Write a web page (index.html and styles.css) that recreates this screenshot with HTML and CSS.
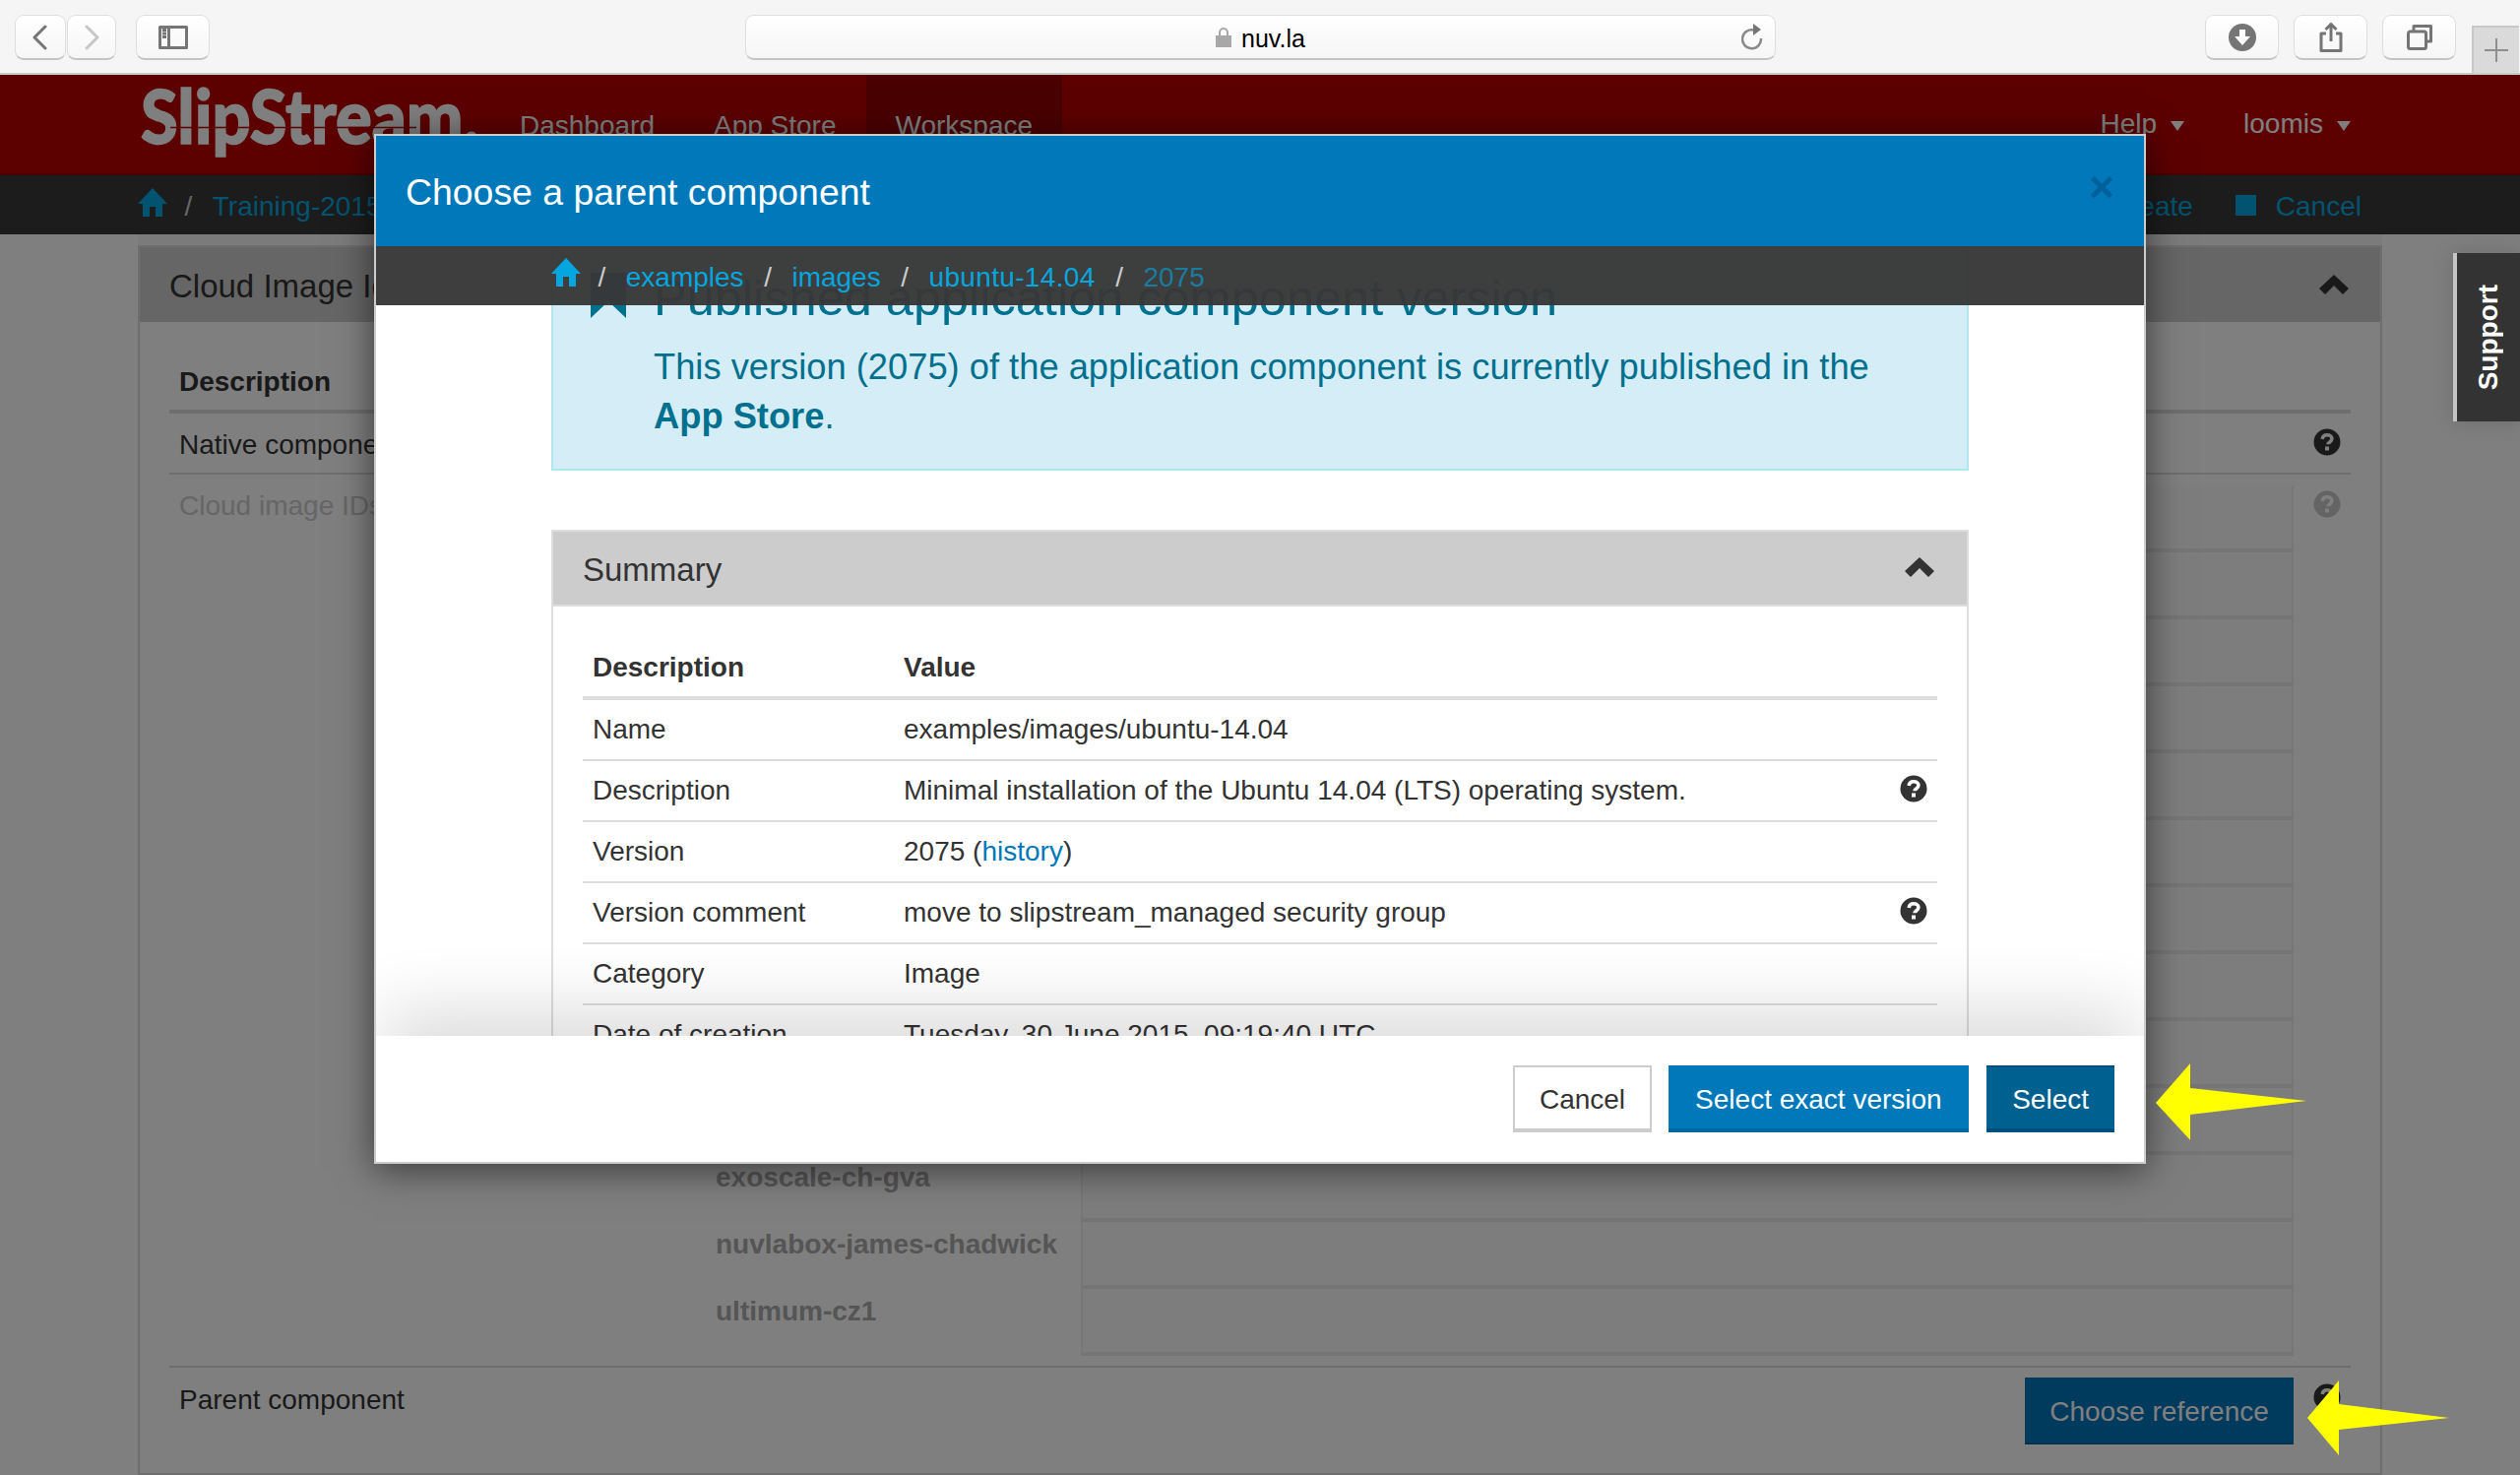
FILE: index.html
```html
<!DOCTYPE html>
<html lang="en">
<head>
<meta charset="utf-8">
<title>SlipStream</title>
<link rel="stylesheet" href="styles.css">
</head>
<body>
<svg class="defs" width="0" height="0">
  <symbol id="home" viewBox="0 0 30 29"><path d="M15 0 30 16H25V29H18V19H12V29H5V16H0Z"/></symbol>
  <symbol id="help" viewBox="0 0 28 28"><circle cx="14" cy="14" r="13.5"/><path class="q" d="M9.2 11c.3-2.800 2.300-4.200 4.900-4.200 2.800 0 4.800 1.500 4.800 3.800 0 3.300-3.900 3.200-3.900 5.600" /><rect class="qd" x="12" y="18.500" width="4" height="4"/></symbol>
  <symbol id="chev" viewBox="0 0 30 20"><path d="M15 0 30 14 24 20 15 11 6 20 0 14Z"/></symbol>
</svg>

<header class="chrome">
  <div class="tb tb-back"><svg width="20" height="26" viewBox="0 0 20 26"><path class="ic" d="M15 2 4 13 15 24"/></svg></div>
  <div class="tb tb-fwd"><svg width="20" height="26" viewBox="0 0 20 26"><path class="ic ic-off" d="M5 2 16 13 5 24"/></svg></div>
  <div class="tb tb-side"><svg width="30" height="24" viewBox="0 0 30 24"><path class="ic ic-thin" d="M1.500 1.500H28.500V22.500H1.500ZM10.500 1.500V22.500M4 4.500H8M4 8H8M4 11.500H8"/></svg></div>
  <div class="url">
    <svg class="lock" width="16" height="21" viewBox="0 0 16 21"><path d="M0 9H16V21H0ZM3 9V6a5 5 0 0 1 10 0V9H11V6a3 3 0 0 0-6 0V9Z"/></svg>
    <span class="url-text">nuv.la</span>
    <svg class="reload" width="22" height="28" viewBox="0 0 22 28"><path class="ic ic-reload" d="M13 7.500A9.500 9.500 0 1 0 20 16"/><path class="arrowhead" d="M12 1 20 7 12 13Z"/></svg>
  </div>
  <div class="tb tb-r tb-dl"><svg width="28" height="28" viewBox="0 0 28 28"><circle class="solid" cx="14" cy="14" r="14"/><path class="knock" d="M11 6H17V13H22L14 22 6 13H11Z"/></svg></div>
  <div class="tb tb-r"><svg width="24" height="30" viewBox="0 0 24 30"><path class="ic ic-thin" d="M7 11H2V28.500H22V11H17M12 19V1.500M6.500 7 12 1.500 17.500 7"/></svg></div>
  <div class="tb tb-r"><svg width="26" height="26" viewBox="0 0 26 26"><path class="ic ic-thin" d="M7 6V1.500H24.500V17H20M3.500 7H17.500a2 2 0 0 1 2 2V22.500a2 2 0 0 1-2 2H3.500a2 2 0 0 1-2-2V9a2 2 0 0 1 2-2Z"/></svg></div>
  <div class="newtab"><svg width="24" height="24" viewBox="0 0 24 24"><path class="ic-plus" d="M12 0V24M0 12H24"/></svg></div>
</header>

<div class="viewport">
  <div class="page">
    <nav class="nav">
      <svg class="logo" width="346" height="82" viewBox="0 0 346 82">
        <text class="logo-text" x="0" y="60" textLength="344" lengthAdjust="spacingAndGlyphs">SlipStream.</text>
        <path class="logo-line" d="M30 43.500H280"/>
      </svg>
      <a class="nav-item">Dashboard</a>
      <a class="nav-item">App Store</a>
      <a class="nav-item nav-active">Workspace</a>
      <div class="nav-right">
        <a class="nav-drop">Help<i class="caret"></i></a>
        <a class="nav-drop nav-drop-user">loomis<i class="caret"></i></a>
      </div>
    </nav>
    <div class="crumbs">
      <svg class="crumb-home"><use href="#home"/></svg>
      <span class="sep">/</span>
      <a class="link">Training-2015</a>
      <div class="crumb-actions">
        <a class="link">Create</a>
        <i class="stop"></i>
        <a class="link">Cancel</a>
      </div>
    </div>

    <main class="wrap">
      <section class="panel">
        <div class="panel-head">
          <h2 class="panel-title">Cloud Image Identifiers and Image Hierarchy</h2>
          <svg class="chev"><use href="#chev"/></svg>
        </div>
        <div class="bg-table">
          <div class="bg-th"><b>Description</b></div>
          <div class="bg-row">
            <span>Native component</span>
            <svg class="help"><use href="#help"/></svg>
          </div>
          <div class="bg-ids">
            <div class="muted">Cloud image IDs</div>
            <div class="clouds">
              <div class="cloud"><span></span><div class="field"></div></div>
              <div class="cloud"><span></span><div class="field"></div></div>
              <div class="cloud"><span></span><div class="field"></div></div>
              <div class="cloud"><span></span><div class="field"></div></div>
              <div class="cloud"><span></span><div class="field"></div></div>
              <div class="cloud"><span></span><div class="field"></div></div>
              <div class="cloud"><span></span><div class="field"></div></div>
              <div class="cloud"><span></span><div class="field"></div></div>
              <div class="cloud"><span></span><div class="field"></div></div>
              <div class="cloud"><span></span><div class="field"></div></div>
              <div class="cloud"><span>exoscale-ch-gva</span><div class="field"></div></div>
              <div class="cloud"><span>nuvlabox-james-chadwick</span><div class="field"></div></div>
              <div class="cloud"><span>ultimum-cz1</span><div class="field"></div></div>
            </div>
            <svg class="help help-muted"><use href="#help"/></svg>
          </div>
          <div class="bg-parent">
            <span class="parent-label">Parent component</span>
            <a class="btn btn-choose">Choose reference</a>
            <svg class="help help-parent"><use href="#help"/></svg>
          </div>
        </div>
      </section>
    </main>
  </div>

  <div class="overlay"></div>

  <aside class="support"><span>Support</span></aside>

  <div class="modal">
    <div class="modal-top">
      <div class="modal-title">
        <h1>Choose a parent component</h1>
        <span class="close">×</span>
      </div>
      <div class="crumbs crumbs-modal">
        <svg class="crumb-home"><use href="#home"/></svg>
        <span class="sep">/</span>
        <a class="link">examples</a>
        <span class="sep">/</span>
        <a class="link">images</a>
        <span class="sep">/</span>
        <a class="link link-wide">ubuntu-14.04</a>
        <span class="sep">/</span>
        <a class="link link-current">2075</a>
      </div>
    </div>
    <div class="modal-body">
      <div class="alert">
        <svg class="bookmark" width="36" height="46" viewBox="0 0 36 46"><path d="M0 0H36V46L18 29 0 46Z"/></svg>
        <div>
          <h3 class="alert-title">Published application component version</h3>
          <p class="alert-text">This version (2075) of the application component is currently published in the <b>App Store</b>.</p>
        </div>
      </div>
      <section class="summary">
        <div class="summary-head">
          <h2 class="summary-title">Summary</h2>
          <svg class="chev chev-light"><use href="#chev"/></svg>
        </div>
        <div class="grid-table">
          <div class="tr tr-head"><b>Description</b><b>Value</b></div>
          <div class="tr"><span>Name</span><span>examples/images/ubuntu-14.04</span></div>
          <div class="tr"><span>Description</span><span>Minimal installation of the Ubuntu 14.04 (LTS) operating system.</span><svg class="help help-light"><use href="#help"/></svg></div>
          <div class="tr"><span>Version</span><span>2075 (<a class="hist">history</a>)</span></div>
          <div class="tr"><span>Version comment</span><span>move to slipstream_managed security group</span><svg class="help help-light"><use href="#help"/></svg></div>
          <div class="tr"><span>Category</span><span>Image</span></div>
          <div class="tr"><span>Date of creation</span><span>Tuesday, 30 June 2015, 09:19:40 UTC</span></div>
        </div>
      </section>
    </div>
    <footer class="modal-foot">
      <a class="btn btn-default">Cancel</a>
      <a class="btn btn-primary">Select exact version</a>
      <a class="btn btn-dark">Select</a>
    </footer>
  </div>

  <svg class="arrow arrow-a" width="154" height="78" viewBox="0 0 154 78"><path d="M0 40 35 0V25L153 38 35 52V78Z"/></svg>
  <svg class="arrow arrow-b" width="146" height="76" viewBox="0 0 146 76"><path d="M0 38 32 0V24L144 38 32 50V76Z"/></svg>
</div>
</body>
</html>
```

FILE: styles.css
```css
* { box-sizing: border-box; }
html, body { margin: 0; padding: 0; }
body {
  width: 2560px;
  height: 1498px;
  overflow: hidden;
  background: #fff;
  color: #333;
  font-family: "Liberation Sans", Arial, sans-serif;
  font-size: 28px;
  line-height: 40px;
}
h1, h2, h3, p { margin: 0; font-weight: normal; }
.defs { position: absolute; }

/* browser chrome */
.chrome {
  display: flex;
  align-items: flex-start;
  height: 76px;
  padding: 15px 0 0 15px;
  background: #f5f5f5;
  border-bottom: 2px solid #ccc;
}
.tb {
  display: flex;
  align-items: center;
  justify-content: center;
  width: 75px;
  height: 46px;
  border: 1px solid #dedede;
  border-bottom: 2px solid #c4c4c4;
  border-radius: 9px;
  background: linear-gradient(#fff, #f6f6f6);
}
.tb-back { width: 52px; }
.tb-fwd { width: 50px; margin-left: 1px; }
.tb-side { width: 75px; margin-left: 20px; }
.tb-r { margin-left: 15px; }
.tb-dl { margin-left: 436px; }
.ic { fill: none; stroke: #757575; stroke-width: 3; stroke-linecap: round; stroke-linejoin: round; }
.ic-off { stroke: #c6c6c6; }
.ic-thin { stroke-width: 3; stroke-linecap: butt; }
.ic-reload { stroke: #8a8a8a; stroke-width: 2.500; stroke-linecap: butt; }
.arrowhead { fill: #757575; }
.solid { fill: #757575; }
.knock { fill: #fff; }
.url {
  position: relative;
  display: flex;
  align-items: center;
  justify-content: center;
  width: 1047px;
  height: 46px;
  margin-left: 544px;
  border: 1px solid #dedede;
  border-bottom: 2px solid #c4c4c4;
  border-radius: 9px;
  background: linear-gradient(#fff, #f6f6f6);
}
.lock { fill: #a8a8a8; margin-right: 10px; }
.url-text { color: #000; font-size: 25px; line-height: 30px; margin-top: 2px; }
.reload { position: absolute; right: 12px; top: 7px; }
.newtab {
  display: flex;
  align-items: center;
  justify-content: center;
  width: 48px;
  height: 48px;
  margin: 11px 0 0 16px;
  background: #dadada;
  border-top: 2px solid #c8c8c8;
  border-left: 2px solid #c8c8c8;
}
.ic-plus { fill: none; stroke: #8f8f8f; stroke-width: 2; }

/* page under the dialog */
.viewport { position: relative; height: 1422px; overflow: hidden; }
.page { height: 100%; background: #fff; }
.nav {
  display: flex;
  height: 102px;
  padding-left: 143px;
  background: #b80000;
  border-bottom: 2px solid #900000;
  line-height: 104px;
  color: #fff;
}
.logo { flex: none; margin: 10px 9px 0 0; }
.logo-text { fill: #fff; stroke: #fff; stroke-width: 1.500; font-family: Lato, "Liberation Sans", sans-serif; font-weight: 900; font-size: 76px; }
.logo-line { stroke: #b80000; stroke-width: 1.500; }
.nav-item { padding: 0 30px; }
.nav-active { background: #940000; }
.nav-right { display: flex; margin-left: auto; padding-right: 172px; }
.nav-drop { display: flex; align-items: center; height: 100px; }
.nav-drop-user { margin-left: 60px; }
.caret {
  width: 0;
  height: 0;
  margin: 4px 0 0 14px;
  border-top: 10px solid #fff;
  border-left: 7px solid transparent;
  border-right: 7px solid transparent;
}
.crumbs {
  display: flex;
  align-items: center;
  gap: 20.500px;
  height: 60px;
  padding: 3px 0 0 140px;
  background: #383838;
  color: #ccc;
}
.crumb-home { flex: none; width: 30px; height: 29px; margin: -8px -3px 0 0; fill: #04a6df; }
.sep { color: #ccc; }
.link { color: #04a6df; white-space: nowrap; }
.link-wide { letter-spacing: .35px; }
.crumb-actions { display: flex; align-items: center; margin-left: auto; padding-right: 161px; }
.stop { width: 21px; height: 21px; margin: -3px 20px 0 43px; background: #04a6df; }

.wrap { width: 2280px; height: 1260px; margin-left: 140px; padding-top: 11px; background: #f6f6f6; }
.panel { height: 100%; border: 2px solid #dcdcdc; background: #fff; }
.panel-head {
  display: flex;
  align-items: center;
  justify-content: space-between;
  height: 76px;
  padding: 0 32px 0 30px;
  background: #ccc;
}
.panel-title { padding-top: 3px; font-size: 33px; white-space: nowrap; }
.chev { width: 30px; height: 20px; fill: #333; }
.bg-table { padding: 27px 30px 0; }
.bg-th { height: 66px; padding: 14px 0 0 10px; border-bottom: 4px solid #dcdcdc; color: #333; }
.bg-row {
  display: flex;
  justify-content: space-between;
  align-items: center;
  height: 62px;
  padding: 0 10px;
  border-bottom: 2px solid #dcdcdc;
}
.bg-row span { padding-top: 3px; }
.help { flex: none; width: 28px; height: 28px; fill: #333; }
.q { fill: none; stroke: #fff; stroke-width: 3.600; }
.qd { fill: #fff; }
.bg-row .help { margin-top: -2px; }
.bg-ids {
  display: grid;
  grid-template-columns: 545px 1fr 58px;
  padding: 11px 0 10px 10px;
}
.muted { padding-top: 1px; color: #ccc; }
.clouds { display: flex; flex-direction: column; }
.cloud { display: grid; grid-template-columns: 371px 1fr; height: 68px; }
.cloud span { padding-top: 3px; color: #aaa; font-weight: bold; white-space: nowrap; }
.field { border: 2px solid #eee; border-top: none; border-bottom: 4px solid #ebebeb; background: #fbfbfb; }
.help-muted { margin: 5px 0 0 20px; fill: #c8c8c8; }
.bg-parent {
  display: flex;
  align-items: flex-start;
  padding: 10px 10px 0;
  border-top: 2px solid #dcdcdc;
}
.parent-label { padding-top: 3px; }
.bg-parent .btn-choose { margin-left: auto; }
.help-parent { margin: 6px 0 0 20px; }

.btn {
  display: block;
  height: 68px;
  padding: 0 26px;
  line-height: 66px;
  white-space: nowrap;
  color: #fff;
}
.btn-choose { background: #0074b8; width: 273px; border-bottom: 2px solid #00659f; text-align: center; padding: 0; line-height: 70px; }

.overlay { position: absolute; inset: 0; background: rgba(0, 0, 0, .5); }

.support {
  position: absolute;
  top: 181px;
  right: 0;
  display: flex;
  align-items: center;
  justify-content: center;
  width: 68px;
  height: 171px;
  background: #333;
  border-left: 4px solid #c4c4c4;
  box-shadow: 0 0 20px rgba(0, 0, 0, .15);
  color: #fff;
  font-size: 28px;
  font-weight: bold;
}
.support span { writing-mode: vertical-rl; transform: rotate(180deg); }

/* dialog */
.modal {
  position: absolute;
  left: 380px;
  top: 60px;
  display: flex;
  flex-direction: column;
  width: 1800px;
  height: 1046px;
  overflow: hidden;
  background: #fff;
  border: 2px solid #ccc;
  box-shadow: 0 6px 36px rgba(0, 0, 0, .55);
}
.modal-top { position: absolute; left: 0; right: 0; top: 0; z-index: 2; }
.modal-title {
  display: flex;
  align-items: center;
  justify-content: space-between;
  height: 112px;
  padding: 0 30px;
  background: #0078b9;
  color: #fff;
}
.modal-title h1 { font-size: 37.400px; line-height: 50px; margin-top: 2px; }
.close { color: #00609a; font-size: 44px; font-weight: bold; line-height: 40px; margin-top: -8px; }
.crumbs-modal { padding-left: 178px; background: rgba(56, 56, 56, .97); }
.crumbs-modal .crumb-home { margin-top: -10px; }
.link-current { opacity: .6; }
.modal-body { flex: 1; min-height: 0; overflow: hidden; padding: 103px 178px 0; }
.alert {
  display: flex;
  gap: 28px;
  padding: 30px 30px 28px 38px;
  background: #d5edf6;
  border: 2px solid #b0e8f0;
  color: #00708f;
}
.bookmark { flex: none; margin-top: 4px; fill: #00708f; }
.alert-title { font-size: 50.500px; line-height: 60px; margin-bottom: 15px; white-space: nowrap; }
.alert-text { font-size: 36.300px; line-height: 50px; }
.summary { margin-top: 60px; border: 2px solid #ddd; }
.summary-head {
  display: flex;
  align-items: center;
  justify-content: space-between;
  height: 76px;
  padding: 0 33px 0 30px;
  background: #ccc;
  border-bottom: 2px solid #ddd;
}
.summary-title { font-size: 33px; padding-top: 3px; }
.chev-light { margin-top: -2px; }
.grid-table { padding: 33px 30px 0; }
.tr {
  display: grid;
  grid-template-columns: 316px 1fr auto;
  align-items: center;
  height: 62px;
  padding: 0 10px;
  border-bottom: 2px solid #ddd;
}
.tr-head { border-bottom-width: 4px; }
.help-light { margin-top: -4px; }
.hist { color: #0078b9; }
.modal-foot {
  position: relative;
  display: flex;
  justify-content: flex-end;
  gap: 18px;
  flex: none;
  height: 128px;
  padding: 30px;
  background: #fff;
  box-shadow: 0 -34px 70px -8px rgba(0, 0, 0, .14);
}
.btn-default { padding: 0 24.500px; margin-right: -1px; color: #333; border: 2px solid #ccc; border-bottom-width: 4px; }
.btn-primary { padding: 0 27.500px; line-height: 70px; background: #0078b9; border-bottom: 4px solid #0068a0; }
.btn-dark { background: #00608f; border-top: 2px solid #004f7d; border-bottom: 4px solid #004f7d; }

.arrow { position: absolute; fill: #ff0; }
.arrow-a { left: 2190px; top: 1004px; }
.arrow-b { left: 2344px; top: 1326px; }
```
